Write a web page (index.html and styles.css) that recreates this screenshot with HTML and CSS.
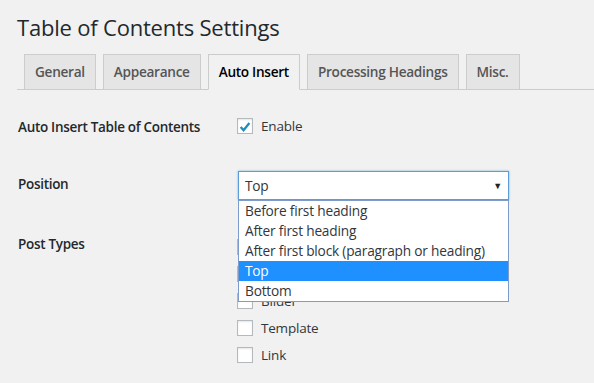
FILE: index.html
```html
<!DOCTYPE html>
<html lang="en">
<head>
  <meta charset="UTF-8" />
  <title>Table of Contents Settings</title>
  <link rel="stylesheet" href="styles.css">
</head>
<body>
  <div class="wrap">
    <h1>Table of Contents Settings</h1>
    <nav class="tabs">
      <a class="tab">General</a>
      <a class="tab">Appearance</a>
      <a class="tab active">Auto Insert</a>
      <a class="tab">Processing Headings</a>
      <a class="tab">Misc.</a>
    </nav>

    <div class="form">
      <div class="row row-enable">
        <div class="label">Auto Insert Table of Contents</div>
        <div class="field">
          <label class="check"><span class="box checked"><svg viewBox="0 0 16 16" width="16" height="16"><path d="M3 8 L6.4 11.6 L13 3.4" fill="none" stroke="#1e8cbe" stroke-width="2.6" stroke-linejoin="miter"/></svg></span>Enable</label>
        </div>
      </div>

      <div class="row row-position">
        <div class="label">Position</div>
        <div class="field">
          <div class="select">
            <span>Top</span>
            <span class="arrow">&#9660;</span>
            <ul class="dropdown">
              <li>Before first heading</li>
              <li>After first heading</li>
              <li>After first block (paragraph or heading)</li>
              <li class="selected">Top</li>
              <li>Bottom</li>
            </ul>
          </div>
        </div>
      </div>

      <div class="row row-types">
        <div class="label">Post Types</div>
        <div class="field list">
          <label class="check"><span class="box"></span></label>
          <label class="check"><span class="box"></span></label>
          <label class="check"><span class="box"></span>Bilder</label>
          <label class="check"><span class="box"></span>Template</label>
          <label class="check"><span class="box"></span>Link</label>
        </div>
      </div>
    </div>
  </div>
</body>
</html>
```

FILE: styles.css
```css
* { box-sizing: border-box; }
body {
  margin: 0;
  background: #f1f1f1;
  font-family: "Open Sans", "Noto Sans", sans-serif;
  font-size: 13px;
  color: #32373c;
  overflow: hidden;
}
.wrap { padding: 13px 0 0 17px; }
h1 {
  margin: 0;
  font-size: 22px; font-weight: 400; line-height: 29px;
  color: #23282d; letter-spacing: -0.2px;
}
.tabs {
  display: flex; gap: 7px;
  margin-top: 12px; padding-left: 7px;
  border-bottom: 1px solid #ccc;
  height: 36px;
}
.tab {
  display: block; height: 36px;
  padding: 0 10px; line-height: 34px;
  border: 1px solid #ccc; background: #e5e5e5;
  font-size: 13.65px; font-weight: 600; color: #555;
  letter-spacing: -0.3px;
}
.tab.active { background: #f1f1f1; border-bottom-color: #f1f1f1; color: #000; }

.form { margin-top: 17px; }
.row { display: grid; grid-template-columns: 220px 1fr; }
.label { font-size: 13.5px; font-weight: 600; color: #23282d; padding-left: 1px; letter-spacing: -0.3px; }
.row-enable { height: 58px; align-items: start; padding-top: 11px; }
.row-position { height: 61px; }
.row-position .label { padding-top: 10px; }
.row-position .field { padding-top: 6px; }
.row-types .label { padding-top: 9px; }

.check { display: flex; align-items: center; gap: 8px; height: 16px; font-size: 13.5px; letter-spacing: -0.2px; color: #32373c; }
.box {
  width: 16px; height: 16px; flex: none;
  border: 1px solid #b4b9be; background: #fff;
  box-shadow: inset 0 1px 2px rgba(0,0,0,0.1);
  display: flex;
}
.list { display: flex; flex-direction: column; gap: 11px; padding-top: 13px; }

.select {
  position: relative;
  width: 271px; height: 29px; margin-left: 1px;
  border: 1px solid #5b9dd9; background: #fff;
  box-shadow: 0 0 2px rgba(30,140,190,0.6);
  display: flex; align-items: center; justify-content: space-between;
  padding: 0 6px 0 6px; font-size: 13.7px; letter-spacing: -0.2px; color: #32373c;
}
.arrow { font-size: 9px; color: #222; }
.dropdown {
  position: absolute; top: 28px; left: -1px; width: 271px;
  margin: 0; padding: 0; list-style: none;
  background: #fff; border: 1px solid #7e9ccb;
  z-index: 10;
}
.dropdown li { height: 20px; line-height: 19px; padding-left: 6px; }
.dropdown li.selected { background: #1e90ff; color: #fff; }
```
